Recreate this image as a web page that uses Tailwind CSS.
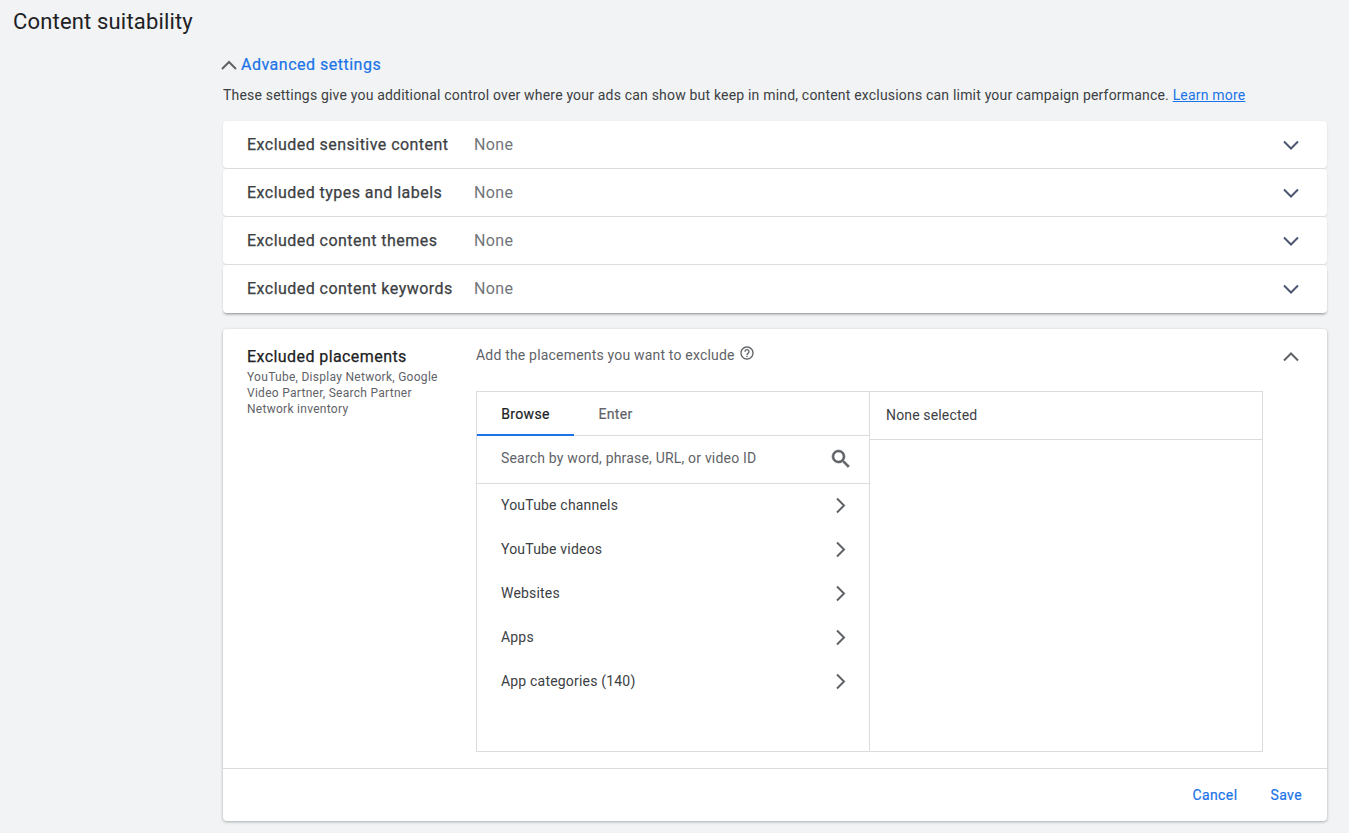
<!DOCTYPE html>
<html lang="en">
<head>
  <meta charset="UTF-8" />
  <title>Content suitability</title>
  <script src="https://cdn.jsdelivr.net/npm/@tailwindcss/browser@4"></script>
</head>
<body class="bg-[#f1f3f4] font-['Roboto',sans-serif] tracking-[0.19px] text-[#3c4043] h-[833px] overflow-hidden">

  <h1 class="pl-[13px] pt-[8px] text-[22px] leading-[28px] text-[#202124] tracking-[0.17px]">Content suitability</h1>

  <main class="ml-[223px] w-[1104px]">
    <!-- Advanced settings -->
    <div class="mt-[17px] flex items-center h-[24px]">
      <svg class="w-[16px] h-[10px] ml-[-2px] text-[#5f6368]" viewBox="0 0 16 10" fill="none" stroke="currentColor" stroke-width="2"><path d="M1 9l7-7 7 7" /></svg>
      <a class="ml-[4px] text-[16px] [-webkit-text-stroke:0.2px] tracking-[0.5px] text-[#1a73e8]">Advanced settings</a>
    </div>
    <p class="mt-[8px] text-[14px] leading-[20px]">These settings give you additional control over where your ads can show but keep in mind, content exclusions can limit your campaign performance. <a class="text-[#1a73e8] underline">Learn more</a></p>

    <!-- Collapsed rows -->
    <div class="mt-[16px] flex flex-col gap-px">
      <div class="flex items-center h-[47px] bg-white rounded-[4px] shadow-[0_1px_2px_rgba(60,64,67,0.15)]">
        <div class="w-[251px] pl-[24px] text-[16px] [-webkit-text-stroke:0.25px] tracking-[0.46px] text-[#3c4043]">Excluded sensitive content</div>
        <div class="flex-1 text-[16px] tracking-[0.4px] text-[#70757a]">None</div>
        <svg class="w-[16px] h-[10px] mr-[28px] text-[#4d5673]" viewBox="0 0 16 10" fill="none" stroke="currentColor" stroke-width="2"><path d="M1 1.5l7 7 7-7" /></svg>
      </div>
      <div class="flex items-center h-[47px] bg-white rounded-[4px] shadow-[0_1px_2px_rgba(60,64,67,0.15)]">
        <div class="w-[251px] pl-[24px] text-[16px] [-webkit-text-stroke:0.25px] tracking-[0.46px] text-[#3c4043]">Excluded types and labels</div>
        <div class="flex-1 text-[16px] tracking-[0.4px] text-[#70757a]">None</div>
        <svg class="w-[16px] h-[10px] mr-[28px] text-[#4d5673]" viewBox="0 0 16 10" fill="none" stroke="currentColor" stroke-width="2"><path d="M1 1.5l7 7 7-7" /></svg>
      </div>
      <div class="flex items-center h-[47px] bg-white rounded-[4px] shadow-[0_1px_2px_rgba(60,64,67,0.15)]">
        <div class="w-[251px] pl-[24px] text-[16px] [-webkit-text-stroke:0.25px] tracking-[0.46px] text-[#3c4043]">Excluded content themes</div>
        <div class="flex-1 text-[16px] tracking-[0.4px] text-[#70757a]">None</div>
        <svg class="w-[16px] h-[10px] mr-[28px] text-[#4d5673]" viewBox="0 0 16 10" fill="none" stroke="currentColor" stroke-width="2"><path d="M1 1.5l7 7 7-7" /></svg>
      </div>
      <div class="flex items-center h-[48px] bg-white rounded-[4px] shadow-[0_2px_3px_-1px_rgba(60,64,67,0.6)]">
        <div class="w-[251px] pl-[24px] text-[16px] [-webkit-text-stroke:0.25px] tracking-[0.46px] text-[#3c4043]">Excluded content keywords</div>
        <div class="flex-1 text-[16px] tracking-[0.4px] text-[#70757a]">None</div>
        <svg class="w-[16px] h-[10px] mr-[28px] text-[#4d5673]" viewBox="0 0 16 10" fill="none" stroke="currentColor" stroke-width="2"><path d="M1 1.5l7 7 7-7" /></svg>
      </div>
    </div>

    <!-- Excluded placements -->
    <section class="mt-[16px] h-[492px] bg-white rounded-[4px] shadow-[0_1px_3px_rgba(60,64,67,0.4)] flex flex-col">
      <div class="flex-1 flex pl-[24px] pt-[18px]">
        <div class="w-[229px]">
          <div class="text-[16px] leading-[20px] [-webkit-text-stroke:0.25px] tracking-[0.42px] text-[#202124]">Excluded placements</div>
          <p class="mt-[2px] w-[200px] text-[12px] leading-[16px] tracking-[0.28px] text-[#5f6368]">YouTube, Display Network, Google Video Partner, Search Partner Network inventory</p>
        </div>
        <div class="w-[787px]">
          <div class="flex items-center h-[16px] text-[14px] text-[#5f6368]">
            <span>Add the placements you want to exclude</span>
            <svg class="ml-[4px] mt-[-4px] w-[16px] h-[16px]" viewBox="0 0 24 24" fill="#5f6368"><path d="M11 18h2v-2h-2v2zm1-16C6.48 2 2 6.48 2 12s4.48 10 10 10 10-4.48 10-10S17.52 2 12 2zm0 18c-4.41 0-8-3.59-8-8s3.59-8 8-8 8 3.59 8 8-3.59 8-8 8zm0-14c-2.21 0-4 1.79-4 4h2c0-1.1.9-2 2-2s2 .9 2 2c0 2-3 1.75-3 5h2c0-2.25 3-2.5 3-5 0-2.21-1.79-4-4-4z" /></svg>
          </div>
          <!-- Two pane picker -->
          <div class="mt-[28px] h-[361px] border border-[#dadce0] flex">
            <div class="w-[393px] border-r border-[#dadce0] flex flex-col">
              <div class="flex h-[44px] border-b border-[#dadce0] text-[14px] [-webkit-text-stroke:0.2px] tracking-[0.35px]">
                <div class="relative w-[97px] flex items-center justify-center pt-[1px] text-[#202124]">Browse
                  <span class="absolute left-0 right-0 bottom-[-1px] h-[2px] bg-[#1a73e8]"></span>
                </div>
                <div class="w-[83px] flex items-center justify-center pt-[1px] text-[#5f6368]">Enter</div>
              </div>
              <div class="flex items-center justify-between h-[48px] border-b border-[#dadce0] pl-[24px] pr-[16px] text-[14px] text-[#5f6368]">
                <span class="mb-[2px]">Search by word, phrase, URL, or video ID</span>
                <svg class="w-[24px] h-[24px] mt-[-2px]" viewBox="0 0 24 24" fill="#5f6368" stroke="#5f6368" stroke-width="0.6"><path d="M15.5 14h-.79l-.28-.27A6.47 6.47 0 0 0 16 9.5 6.5 6.5 0 1 0 9.5 16c1.61 0 3.09-.59 4.23-1.57l.27.28v.79l5 4.99L20.49 19l-4.99-5zm-6 0C7.01 14 5 11.99 5 9.5S7.01 5 9.5 5 14 7.01 14 9.5 11.99 14 9.5 14z" /></svg>
              </div>
              <ul class="text-[14px] text-[#3c4043]">
                <li class="flex items-center justify-between h-[44px] pl-[24px] pr-[23px]"><span class="mb-[2px]">YouTube channels</span>
                  <svg class="w-[11px] h-[17px] mb-[2px] text-[#5f6368]" viewBox="0 0 11 17" fill="none" stroke="currentColor" stroke-width="2"><path d="M2 1.5l7 7-7 7" /></svg>
                </li>
                <li class="flex items-center justify-between h-[44px] pl-[24px] pr-[23px]"><span class="mb-[2px]">YouTube videos</span>
                  <svg class="w-[11px] h-[17px] mb-[2px] text-[#5f6368]" viewBox="0 0 11 17" fill="none" stroke="currentColor" stroke-width="2"><path d="M2 1.5l7 7-7 7" /></svg>
                </li>
                <li class="flex items-center justify-between h-[44px] pl-[24px] pr-[23px]"><span class="mb-[2px]">Websites</span>
                  <svg class="w-[11px] h-[17px] mb-[2px] text-[#5f6368]" viewBox="0 0 11 17" fill="none" stroke="currentColor" stroke-width="2"><path d="M2 1.5l7 7-7 7" /></svg>
                </li>
                <li class="flex items-center justify-between h-[44px] pl-[24px] pr-[23px]"><span class="mb-[2px]">Apps</span>
                  <svg class="w-[11px] h-[17px] mb-[2px] text-[#5f6368]" viewBox="0 0 11 17" fill="none" stroke="currentColor" stroke-width="2"><path d="M2 1.5l7 7-7 7" /></svg>
                </li>
                <li class="flex items-center justify-between h-[44px] pl-[24px] pr-[23px]"><span class="mb-[2px]">App categories (140)</span>
                  <svg class="w-[11px] h-[17px] mb-[2px] text-[#5f6368]" viewBox="0 0 11 17" fill="none" stroke="currentColor" stroke-width="2"><path d="M2 1.5l7 7-7 7" /></svg>
                </li>
              </ul>
            </div>
            <div class="flex-1">
              <div class="flex items-center h-[48px] border-b border-[#dadce0] pl-[16px] text-[14px] tracking-[0.15px] text-[#3c4043]">None selected</div>
            </div>
          </div>
        </div>
        <svg class="ml-[20px] mt-[5px] w-[16px] h-[10px] text-[#5f6368]" viewBox="0 0 16 10" fill="none" stroke="currentColor" stroke-width="2"><path d="M1 8.5l7-7 7 7" /></svg>
      </div>
      <div class="h-[53px] border-t border-[#dadce0] flex items-center justify-end pt-[1px] pr-[25px] gap-[33px] text-[14px] [-webkit-text-stroke:0.2px] tracking-[0.4px] text-[#1a73e8]">
        <span>Cancel</span>
        <span>Save</span>
      </div>
    </section>
  </main>
</body>
</html>
